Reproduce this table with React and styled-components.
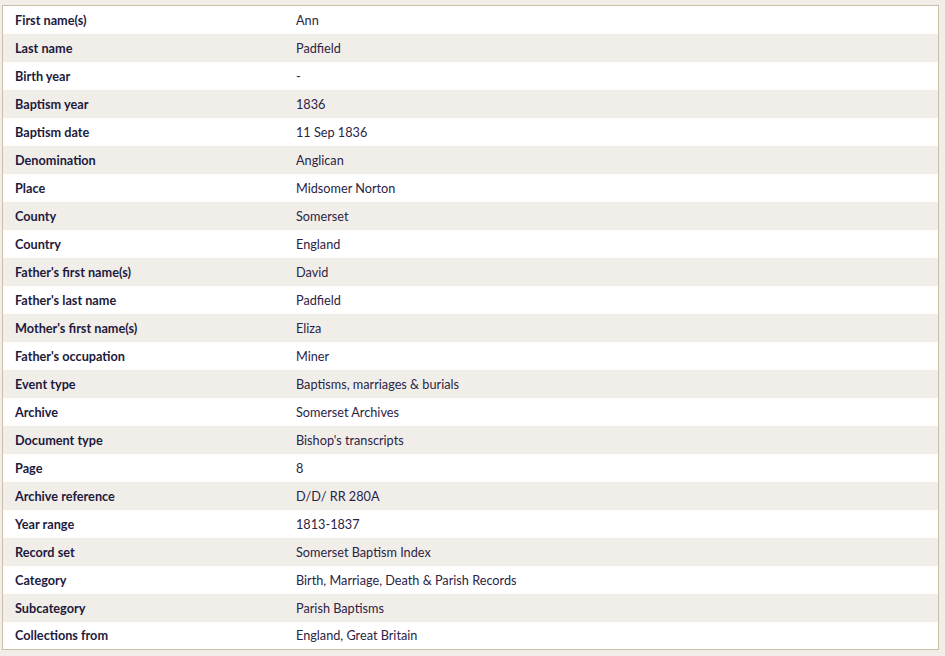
import React from "react";
import styled, { createGlobalStyle } from "styled-components";

const rows = [
  ["First name(s)", "Ann"],
  ["Last name", "Padfield"],
  ["Birth year", "-"],
  ["Baptism year", "1836"],
  ["Baptism date", "11 Sep 1836"],
  ["Denomination", "Anglican"],
  ["Place", "Midsomer Norton"],
  ["County", "Somerset"],
  ["Country", "England"],
  ["Father's first name(s)", "David"],
  ["Father's last name", "Padfield"],
  ["Mother's first name(s)", "Eliza"],
  ["Father's occupation", "Miner"],
  ["Event type", "Baptisms, marriages & burials"],
  ["Archive", "Somerset Archives"],
  ["Document type", "Bishop's transcripts"],
  ["Page", "8"],
  ["Archive reference", "D/D/ RR 280A"],
  ["Year range", "1813-1837"],
  ["Record set", "Somerset Baptism Index"],
  ["Category", "Birth, Marriage, Death & Parish Records"],
  ["Subcategory", "Parish Baptisms"],
  ["Collections from", "England, Great Britain"],
];

const GlobalStyle = createGlobalStyle`
  body {
    margin: 0;
    padding: 5px 6px 0 2px;
    background: #f1eee9;
    font-family: Lato, "Liberation Sans", sans-serif;
  }
`;

const Table = styled.table`
  width: 100%;
  border-collapse: collapse;
  border: 1px solid #c9bfa9;
  background: #fff;
`;

const Row = styled.tr`
  height: 28px;
  background: ${(p) => (p.$shaded ? "#f1eee9" : "#fff")};
`;

const Label = styled.th`
  width: 281px;
  padding: 0 0 0 12px;
  text-align: left;
  font-size: 12.7px;
  font-weight: 700;
  color: #1d1a3d;
`;

const Value = styled.td`
  padding: 0;
  font-size: 12.7px;
  color: #2b2446;
`;

export default function App() {
  return (
    <>
      <GlobalStyle />
      <Table>
        <tbody>
          {rows.map(([label, value], i) => (
            <Row key={label} $shaded={i % 2 === 1}>
              <Label>{label}</Label>
              <Value>{value}</Value>
            </Row>
          ))}
        </tbody>
      </Table>
    </>
  );
}
